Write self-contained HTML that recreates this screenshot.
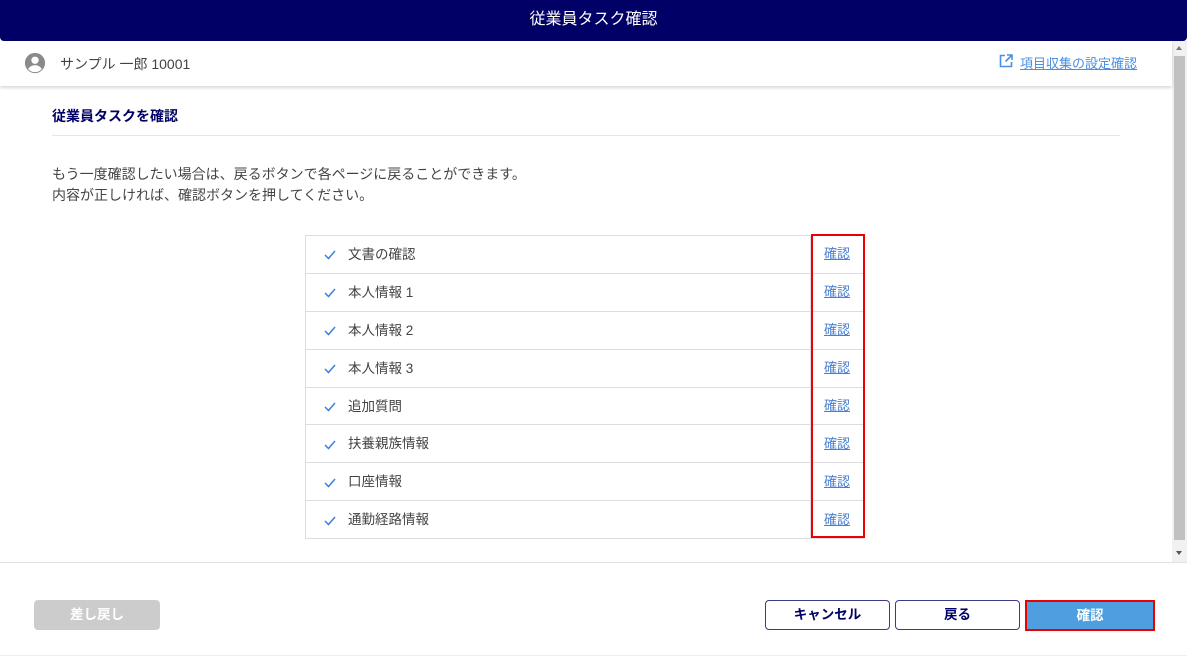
<!DOCTYPE html>
<html><head><meta charset="utf-8"><style>
*{margin:0;padding:0;box-sizing:border-box}
body{width:1187px;height:657px;overflow:hidden;background:#fff;font-family:"Liberation Sans","Noto Sans CJK JP",sans-serif;color:#333;position:relative}
.hdr{position:absolute;left:0;top:0;width:1187px;height:41px;background:#000066;color:#fff;font-size:16px;text-align:center;line-height:39px;border-radius:0 0 4px 4px}
.user{position:absolute;left:0;top:41px;width:1172px;height:45px;background:#fff;box-shadow:0 2px 3px rgba(0,0,0,.15);z-index:2}
.user .name{position:absolute;left:60px;top:13px;font-size:14px;color:#444}
.user .lnk{position:absolute;left:1020px;top:12px;font-size:13px;color:#4a90e2;text-decoration:underline}
.sb{position:absolute;left:1172px;top:41px;width:15px;height:521px;background:#f1f1f1}
.thumb{position:absolute;left:1174px;top:56px;width:11px;height:484px;background:#c1c1c1}
.title{position:absolute;left:52px;top:106px;font-size:14px;font-weight:bold;color:#000066}
.hr{position:absolute;left:52px;top:135px;width:1068px;height:1px;background:#e6e6e6}
.desc{position:absolute;left:52px;top:164px;font-size:14px;line-height:21px;color:#444}
table{position:absolute;left:305px;top:235px;width:559px;border-collapse:collapse}
td{border:1px solid #ddd;height:37.9px;font-size:13.5px;color:#444;padding-bottom:3px}
td.c{width:53px;text-align:center}
td.c a{color:#4a7fd0;text-decoration:underline;font-size:13px}
.ck{display:inline-block;margin:0 12px 0 18px;vertical-align:middle}
.red{position:absolute;left:811px;top:234px;width:54px;height:304px;border:2px solid #e00}
.foot{position:absolute;left:0;top:562px;width:1187px;height:1px;background:#e0e0e0}
.foot2{position:absolute;left:0;top:655px;width:1187px;height:1px;background:#eee}
.btn{position:absolute;top:600px;height:30px;border-radius:4px;font-size:13.5px;font-weight:bold;text-align:center;line-height:28px}
</style></head><body>
<div class="hdr">従業員タスク確認</div>
<div class="user">
<svg style="position:absolute;left:24px;top:11px" width="22" height="22" viewBox="0 0 24 24"><circle cx="12" cy="12" r="11" fill="#8a8a8a"/><circle cx="12" cy="9" r="4" fill="#fff"/><path d="M4.5 18.5c2-3 5-4 7.5-4s5.5 1 7.5 4c-2 2.3-4.7 3.5-7.5 3.5s-5.5-1.2-7.5-3.5z" fill="#fff"/></svg>
<div class="name">サンプル 一郎 10001</div>
<svg style="position:absolute;left:999px;top:13px" width="14" height="14" viewBox="0 0 14 14"><path d="M6 1.5H1.5v11h11V8" fill="none" stroke="#4a90e2" stroke-width="1.6"/><path d="M8 1h5v5M13 1L6.5 7.5" fill="none" stroke="#4a90e2" stroke-width="1.6"/></svg>
<div class="lnk">項目収集の設定確認</div>
</div>
<div class="sb"></div><div class="thumb"></div>
<div style="position:absolute;left:1176px;top:46px;width:0;height:0;border:3.5px solid transparent;border-bottom:4px solid #777;border-top:0"></div>
<div style="position:absolute;left:1176px;top:551px;width:0;height:0;border:3.5px solid transparent;border-top:4px solid #555;border-bottom:0"></div>
<div class="title">従業員タスクを確認</div>
<div class="hr"></div>
<div class="desc">もう一度確認したい場合は、戻るボタンで各ページに戻ることができます。<br>内容が正しければ、確認ボタンを押してください。</div>
<table>
<tr><td><svg class="ck" width="12" height="10" viewBox="0 0 12 10"><path d="M1 5l3.5 3.5L11 1" fill="none" stroke="#3d7fe0" stroke-width="1.5"/></svg>文書の確認</td><td class="c"><a>確認</a></td></tr>
<tr><td><svg class="ck" width="12" height="10" viewBox="0 0 12 10"><path d="M1 5l3.5 3.5L11 1" fill="none" stroke="#3d7fe0" stroke-width="1.5"/></svg>本人情報 1</td><td class="c"><a>確認</a></td></tr>
<tr><td><svg class="ck" width="12" height="10" viewBox="0 0 12 10"><path d="M1 5l3.5 3.5L11 1" fill="none" stroke="#3d7fe0" stroke-width="1.5"/></svg>本人情報 2</td><td class="c"><a>確認</a></td></tr>
<tr><td><svg class="ck" width="12" height="10" viewBox="0 0 12 10"><path d="M1 5l3.5 3.5L11 1" fill="none" stroke="#3d7fe0" stroke-width="1.5"/></svg>本人情報 3</td><td class="c"><a>確認</a></td></tr>
<tr><td><svg class="ck" width="12" height="10" viewBox="0 0 12 10"><path d="M1 5l3.5 3.5L11 1" fill="none" stroke="#3d7fe0" stroke-width="1.5"/></svg>追加質問</td><td class="c"><a>確認</a></td></tr>
<tr><td><svg class="ck" width="12" height="10" viewBox="0 0 12 10"><path d="M1 5l3.5 3.5L11 1" fill="none" stroke="#3d7fe0" stroke-width="1.5"/></svg>扶養親族情報</td><td class="c"><a>確認</a></td></tr>
<tr><td><svg class="ck" width="12" height="10" viewBox="0 0 12 10"><path d="M1 5l3.5 3.5L11 1" fill="none" stroke="#3d7fe0" stroke-width="1.5"/></svg>口座情報</td><td class="c"><a>確認</a></td></tr>
<tr><td><svg class="ck" width="12" height="10" viewBox="0 0 12 10"><path d="M1 5l3.5 3.5L11 1" fill="none" stroke="#3d7fe0" stroke-width="1.5"/></svg>通勤経路情報</td><td class="c"><a>確認</a></td></tr>
</table>
<div class="red"></div>
<div class="foot"></div>
<div class="btn" style="left:34px;width:126px;background:#ccc;color:#fff;line-height:30px">差し戻し</div>
<div class="btn" style="left:765px;width:125px;border:1px solid #3a3a85;color:#000066">キャンセル</div>
<div class="btn" style="left:895px;width:125px;border:1px solid #3a3a85;color:#000066">戻る</div>
<div class="btn" style="left:1025px;width:130px;height:31px;border:2px solid #e00;border-radius:0;background:#4f9fe0;color:#fff;line-height:27px">確認</div>
<div class="foot2"></div>
</body></html>
